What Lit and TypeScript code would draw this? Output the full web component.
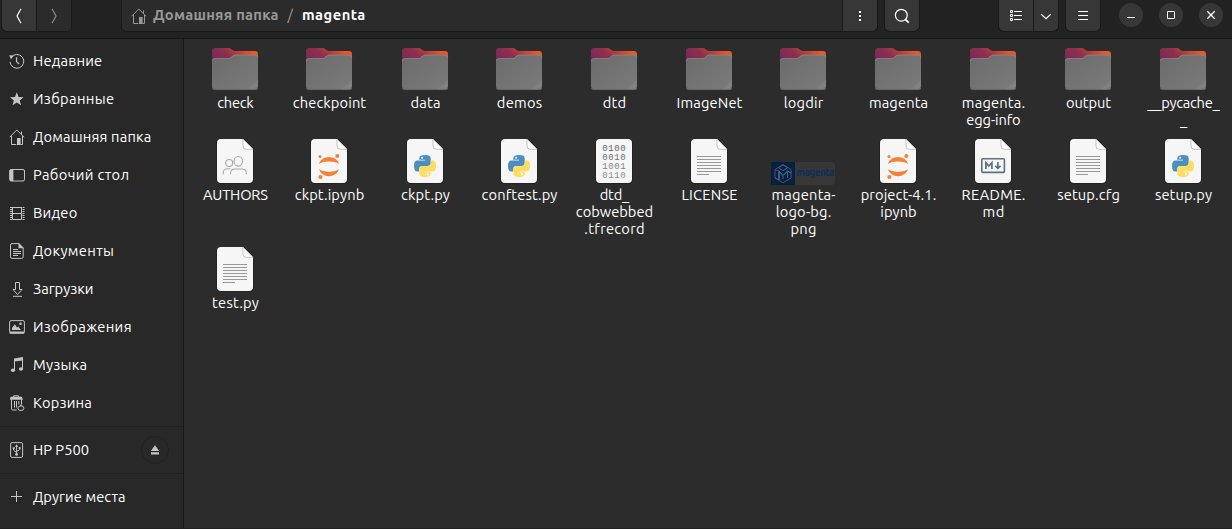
import { LitElement, html, svg, css, nothing, TemplateResult } from "lit";
import { customElement, property } from "lit/decorators.js";

const FAMILY = `Ubuntu, "Noto Sans", "Open Sans", sans-serif`;
const pen = document.createElement("canvas").getContext("2d")!;

/** Letter spacing that makes a line of text span the given ink width. */
function tracking(text: string, width: number, weight: number, size: number): number {
  if (text.length < 2) return 0;
  pen.font = `${weight} ${size}px ${FAMILY}`;
  const m = pen.measureText(text);
  return (width - (m.actualBoundingBoxRight + m.actualBoundingBoxLeft)) / (text.length - 1);
}

@customElement("text-line")
class TextLine extends LitElement {
  @property() text = "";
  @property({ type: Number }) width = 0;
  @property({ type: Number }) weight = 400;
  @property({ type: Number }) size = 14.667;
  static styles = css`
    :host { display: block; white-space: pre; height: 17px; line-height: 15px; }
  `;
  render() {
    const s = tracking(this.text, this.width, this.weight, this.size);
    return html`<span style="letter-spacing:${s}px;margin-right:${-s}px;font-size:${this.size}px;font-weight:${this.weight}">${this.text}</span>`;
  }
}

const house = svg`<path d="M.5 8.3 7.8 1l7.4 7.3M12.5 5.4V2.5M2.5 7v8.5h4.8M13.5 7v8.5h-2" fill="none" stroke="currentColor"/><path d="M8 9h3.6v7H8z" fill="currentColor"/>`;

const glyphs: Record<string, TemplateResult> = {
  home: house,
  recent: svg`<g fill="none" stroke="currentColor"><path d="M2.3 4.3A6.9 6.9 0 1 1 1 8.8"/><path d="M7.5 4.2v4.3l2.6 2.7" stroke-width="1.2"/></g><path d="M.2 2.2 4.8 2.6 2 6.2z" fill="currentColor"/>`,
  star: svg`<path fill="currentColor" d="m7.8 1.2 1.8 4.7 5 .3-3.9 3.2 1.4 4.9-4.300-2.800-4.300 2.800L4.900 9.400 1 6.200l5-.3z"/>`,
  desktop: svg`<rect x=".6" y="2.5" width="14.9" height="11.5" rx="1.5" fill="none" stroke="currentColor"/><path d="M1 3h3.4v11H1z" fill="currentColor"/>`,
  video: svg`<path fill="none" stroke="currentColor" d="M3.5 2v12.5M12.5 2v12.5M3.5 2.5h9M3.5 8.500h9M3.5 14.500h9"/><path stroke="currentColor" stroke-width="2" stroke-dasharray="1 1" d="M2 2v13M14.500 2v13"/>`,
  document: svg`<path fill="none" stroke="currentColor" d="M3 .6h7l4.2 4.1v9.2a1.5 1.5 0 0 1-1.5 1.5H3a1.5 1.5 0 0 1-1.500-1.500V2.100A1.500 1.500 0 0 1 3 .6z"/><path d="M9.5 0 14.600 5.200H9.500z" fill="currentColor"/><path stroke="currentColor" d="M4 6.5h5M4 8.5h8M4 10.5h8M4 12.5h5"/>`,
  download: svg`<path fill="none" stroke="currentColor" d="M6.5 1.5h4v7H13l-4.500 5-4.500-5h2.500zM4 15.300h9"/>`,
  picture: svg`<rect x=".6" y="1.6" width="14.8" height="12.3" rx="1.6" fill="none" stroke="currentColor"/><path fill="currentColor" d="M.5 12.500h15v1.300a1 1 0 0 1-1 1h-13a1 1 0 0 1-1-1zM3 11V9l2.800-3.800L8 8.400l1.200-1L12 11z"/><circle cx="11.5" cy="4.7" r="1.3" fill="currentColor"/>`,
  music: svg`<path fill="currentColor" d="M5 1.400 14 0v3.400L5 4.600z"/><path stroke="currentColor" d="M5.500 2v11M13.500 1v11"/><ellipse cx="4" cy="13.2" rx="2.1" ry="1.8" fill="currentColor"/><ellipse cx="12" cy="12" rx="2.1" ry="1.8" fill="currentColor"/>`,
  trash: svg`<path fill="none" stroke="currentColor" d="M2.500 4.500v9.300q0 1.200 1.200 1.200h4M12.500 4.500V9M4.600 2V.8h5V2M5.500 6v6.500M7.500 6v6.500M9.800 6v3.500"/><path fill="currentColor" d="M1.500 1.800h11.300l1.200 2.900H1z"/><ellipse cx="11.9" cy="13.2" rx="3" ry="2.3" fill="none" stroke="currentColor"/><path d="m11 10.700 1-2 1.600 2" fill="currentColor"/>`,
  usb: svg`<rect x="1.6" y=".6" width="12" height="14.8" rx="1.5" fill="none" stroke="currentColor"/><path fill="none" stroke="currentColor" d="M7.600 4v8.500M4.600 6.500v1.700l3 2.400M10.700 5.700v2l-3 1.600"/><path fill="currentColor" d="m7.600 2.200 1.700 2.500H5.900zM3.700 5.300h2v2h-2zM9.800 5h1.800v2H9.800z"/><circle cx="7.6" cy="12.4" r="1.4" fill="currentColor"/>`,
  plus: svg`<path stroke="currentColor" d="M2 7.500h11M7.500 2v11"/>`,
  eject: svg`<path fill="currentColor" d="M8 3.200 12.200 9H3.800zM4 10.200h8v2.300H4z"/>`,
  back: svg`<path fill="none" stroke="currentColor" stroke-width="1.2" d="M10 .8 6 8l4 7.200"/>`,
  forward: svg`<path fill="none" stroke="currentColor" stroke-width="1.2" d="m6 .8 4 7.200-4 7.200"/>`,
  dots: svg`<path fill="currentColor" d="M7 3h2v2H7zM7 7h2v2H7zM7 11h2v2H7z"/>`,
  search: svg`<circle cx="7.3" cy="7.2" r="5.9" fill="none" stroke="currentColor" stroke-width="1.2"/><path stroke="currentColor" stroke-width="1.9" d="m11.400 11.300 3.300 3.300"/>`,
  list: svg`<path fill="none" stroke="currentColor" d="M2.500 2.500h2v2h-2zM2.500 6.500h2v2h-2zM2.500 10.500h2v2h-2zM6 3.500h8M6 7.500h8M6 11.500h8"/>`,
  down: svg`<path fill="none" stroke="currentColor" stroke-width="1.2" d="m3.200 6.200 4.800 4.400 4.800-4.400"/>`,
  menu: svg`<path stroke="currentColor" d="M3 3.500h10M3 7.500h10M3 11.500h10"/>`,
  minimize: svg`<path stroke="currentColor" d="M4 10.500h8"/>`,
  maximize: svg`<path fill="none" stroke="currentColor" d="M4.500 4.500h7v7h-7z"/>`,
  close: svg`<path stroke="currentColor" stroke-width="1.3" d="m4.300 4.300 7.400 7.400M11.700 4.300l-7.400 7.400"/>`,
};

const icon = (name: string) =>
  html`<svg class="glyph" width="16" height="16" viewBox="0 0 16 16">${glyphs[name]}</svg>`;

const folder = html`<svg width="64" height="48" viewBox="0 0 64 48">
  <defs>
    <linearGradient id="back" x1="0" y1=".7" x2="1" y2=".3">
      <stop offset="0" stop-color="#74285a" /><stop offset=".42" stop-color="#8e304e" />
      <stop offset=".6" stop-color="#b03e3c" /><stop offset=".92" stop-color="#e9582a" />
    </linearGradient>
    <linearGradient id="front" x1="0" y1="0" x2="1" y2="1">
      <stop offset="0" stop-color="#6b6b6b" /><stop offset="1" stop-color="#7b7b7b" />
    </linearGradient>
  </defs>
  <path fill="url(#back)" d="M12 3h13.500q2 0 3 1.200l1.300 1q1 .8 2.200.8H52q3 0 3 3v12H9V6q0-3 3-3z" />
  <path fill="url(#front)" d="M9 16.500q0-3.300 3-3.300h13.500q2 0 3.300-1.600l1-1q1-.8 2.200-.8H52q3 0 3 3V42q0 3-3 3H12q-3 0-3-3z" />
  <path fill="none" stroke="#8c8c8c" stroke-width=".7" d="M9.200 16q.3-2.400 2.800-2.400h13.500q2 0 3.300-1.600l1-1q1-.8 2.200-.8H52q2.600 0 2.800 2.400" />
  <path fill="#808080" d="m44 45 11-10v7q0 3-3 3z" />
  <path fill="none" stroke="#595959" stroke-width=".7" d="M9.300 42q0 2.700 2.700 2.700h40q2.700 0 2.700-2.700" />
</svg>`;

const sheet = (art: TemplateResult, folded = true) => html`<svg width="64" height="48" viewBox="-14 -2 64 48">
  <rect x="-.6" y="0" width="37.2" height="44.7" rx="4" fill="#1f1f1f" />
  ${folded
    ? svg`<path fill="#f6f6f6" d="M4 0h22l10 10v30q0 4-4 4H4q-4 0-4-4V4q0-4 4-4z"/><path fill="#2c2c2c" d="M26.500-1H38v12z"/><path fill="#fff" stroke="#aaa" stroke-width=".7" d="M26 0v7q0 3.300 3.300 3.300H36z"/>`
    : svg`<rect width="36" height="44" rx="4" fill="#f6f6f6"/>`}
  ${art}
</svg>`;

const art: Record<string, () => TemplateResult> = {
  folder: () => folder,
  text: () => sheet(svg`<path stroke="#999" d="M6 17.500h24M6 20.500h24M6 23.500h24M6 26.500h24M6 29.500h24M6 32.500h24M6 35.500h12"/>`),
  authors: () => sheet(svg`<g fill="none" stroke="#aaa" stroke-width="1.1"><ellipse cx="21.3" cy="22.3" rx="4.3" ry="4.8"/><circle cx="12.2" cy="24" r="3.5"/><path d="M13.500 35.300v-1q0-4.300 4.300-4.300h7q4.500 0 4.500 4.300v1M6.300 35.300v-1.500q0-4 4-4h3"/></g>`),
  jupyter: () => sheet(svg`<g fill="#f58236"><path d="M7.800 24.800q2.800-6.800 10.200-6.800t10.200 6.800Q24 22.400 18 22.400T7.800 24.800zM7.800 30.300Q12 33 18 33t10.200-2.700q-2.800 6.900-10.200 6.900T7.800 30.300z"/><circle cx="26.3" cy="17.100" r="2"/><circle cx="9" cy="17.600" r="1.500"/><circle cx="9.400" cy="38" r="2.100"/></g>`),
  python: () => sheet(svg`<g transform="translate(7 16)"><path fill="#4d8ec0" d="M11 0q5.700 0 5.700 3.300v4.400Q16.700 11 13.400 11H8.500Q5.200 11 5.200 14.300V16.500H3.300Q0 16.500 0 11T3.300 5.500H11V4.700H5.300V3.300Q5.300 0 11 0z"/><path fill="#ffdc63" d="M11 22q5.700 0 5.700-3.300v-1.400H11v-.8h7.700q3.300 0 3.300-5.500t-3.300-5.500h-1.900v2.200q0 3.300-3.300 3.300H8.600q-3.300 0-3.300 3.300v4.400Q5.300 22 11 22z"/><circle cx="8.100" cy="2.800" r="1" fill="#fff"/><circle cx="13.900" cy="19.200" r="1" fill="#fff"/></g>`),
  binary: () => sheet(svg`<g class="bits">${["0100", "0010", "1001", "0110"].map(
    (row, i) => svg`<text x="6.300" y=${12.3 + i * 9} textLength="23.400" fill=${["#666", "#707070", "#858585", "#909090"][i]}>${row}</text>`)}</g>`, false),
  markdown: () => sheet(svg`<rect x="6.800" y="19.800" width="22.600" height="13.600" rx="1" fill="none" stroke="#5c737b" stroke-width="1.600"/><path fill="none" stroke="#5c737b" stroke-width="1.700" d="M10.900 30v-6.300l3 3.300 3-3.300V30M22.900 23v6M20.300 26.800l2.600 2.600 2.600-2.600"/>`),
  logo: () => html`<svg width="64" height="48" viewBox="0 0 64 48">
    <path fill="#373737" d="M22 25h38q4 0 4 4v15q0 4-4 4H22z" /><path fill="#01233f" d="M0 25h24v23H0z" />
    <g fill="none" stroke-width="1"><path stroke="#71406d" d="M4 32.500l8-4.800 8 4.800v8.500l-8 4.800-8-4.800zM4 32.500l4 1.500v8.500l-4-1.500" /><path stroke="#3c91a4" d="M8 43v-8.500l4.200 4 4.300-4.500 3.500 2" /><path stroke="#525a94" d="M12 27.700l-4.500 3 4.500 3 4.500-3zM12 42v-3.500M16.500 41v-6.500" /></g>
    <text class="brand" x="25.300" y="39.300" textLength="38">magenta</text>
  </svg>`,
};

type Line = [string, number];
const files: { kind: string; lines: Line[] }[] = [
  { kind: "folder", lines: [["check", 37]] },
  { kind: "folder", lines: [["checkpoint", 73.5]] },
  { kind: "folder", lines: [["data", 29.7]] },
  { kind: "folder", lines: [["demos", 45]] },
  { kind: "folder", lines: [["dtd", 22.7]] },
  { kind: "folder", lines: [["ImageNet", 65]] },
  { kind: "folder", lines: [["logdir", 39]] },
  { kind: "folder", lines: [["magenta", 57.7]] },
  { kind: "folder", lines: [["magenta.", 61.7], ["egg-info", 53.7]] },
  { kind: "folder", lines: [["output", 45.3]] },
  { kind: "folder", lines: [["__pycache_", 74.3], ["_", 7.7]] },
  { kind: "authors", lines: [["AUTHORS", 65.3]] },
  { kind: "jupyter", lines: [["ckpt.ipynb", 69]] },
  { kind: "python", lines: [["ckpt.py", 48.7]] },
  { kind: "python", lines: [["conftest.py", 75.7]] },
  { kind: "binary", lines: [["dtd_", 30.3], ["cobwebbed", 76.7], [".tfrecord", 59.7]] },
  { kind: "text", lines: [["LICENSE", 55]] },
  { kind: "logo", lines: [["magenta-", 63], ["logo-bg.", 54], ["png", 24.7]] },
  { kind: "jupyter", lines: [["project-4.1.", 74], ["ipynb", 34.7]] },
  { kind: "markdown", lines: [["README.", 62.3], ["md", 20.3]] },
  { kind: "text", lines: [["setup.cfg", 62.3]] },
  { kind: "python", lines: [["setup.py", 57]] },
  { kind: "text", lines: [["test.py", 45.7]] },
];

const places: [string, string, number][] = [
  ["recent", "Недавние", 68],
  ["star", "Избранные", 80],
  ["home", "Домашняя папка", 117.7],
  ["desktop", "Рабочий стол", 94.5],
  ["video", "Видео", 42.7],
  ["document", "Документы", 80],
  ["download", "Загрузки", 59.7],
  ["picture", "Изображения", 96.7],
  ["music", "Музыка", 52.5],
  ["trash", "Корзина", 57.3],
];

@customElement("app-root")
class AppRoot extends LitElement {
  static styles = css`
    * { box-sizing: border-box; }
    :host {
      display: flex; flex-direction: column; width: 100%; height: 529px; overflow: hidden;
      background: #2c2c2c; color: #fff;
      font: 14.667px/17px Ubuntu, "Noto Sans", "Open Sans", sans-serif;
    }
    svg { display: block; flex: none; }
    header {
      display: flex; flex: none; align-items: flex-start; height: 39px; padding-left: 1px;
      background: #222; border-bottom: 1px solid #161616;
    }
    .group {
      display: flex; height: 32px; border: 1px solid #191919; border-top: 0;
      border-radius: 0 0 6px 6px; background: #373737; overflow: hidden;
    }
    .btn { display: grid; place-items: center; width: 34px; height: 31px; }
    .btn + .btn, .path + .btn { width: 35px; border-left: 1px solid #191919; }
    .btn.off { background: #2b2b2b; color: #8c8c8c; }
    .btn.slim.slim { width: 25px; }
    .location { width: 757px; margin-left: 49px; }
    .path { display: flex; flex: 1; align-items: center; gap: 6px; padding-left: 9px; background: #2b2b2b; color: #999; }
    .path .slash { height: 17px; line-height: 15px; padding: 0 3px; }
    .current { color: #fff; }
    .search { margin-left: 6px; }
    .view { margin-left: 78px; }
    .main-menu { margin-left: 6px; }
    .controls { display: flex; gap: 16px; margin: 3px 0 0 18px; }
    .control { display: grid; place-items: center; width: 24px; height: 24px; border-radius: 50%; background: #373737; }
    .body { display: flex; flex: 1; min-height: 0; border-bottom: 1px solid #212121; }
    aside { width: 184px; flex: none; padding-top: 3px; background: #282828; border-right: 1px solid #171717; }
    .place { display: flex; align-items: center; gap: 8px; height: 38px; padding-left: 9px; }
    .place .glyph { color: #c5c5c5; }
    .rule { height: 1px; background: #212121; }
    .place.device { height: 46px; }
    .eject { display: grid; place-items: center; width: 28px; height: 28px; margin: 0 14px 0 auto; border: 1px solid #212121; border-radius: 50%; }
    .spacer { height: 4px; }
    .files {
      display: grid; flex: 1; padding: 6px 0 0 4px;
      grid-template-columns: 94px 96px 94px 95px 95px 94px 95px 95px 95px 95px 94px;
      grid-template-rows: 92px 108px 100px;
    }
    .file { display: flex; flex-direction: column; align-items: center; width: 94px; }
    .name { display: flex; flex-direction: column; align-items: center; padding: 2px 0 0 1px; }
    .bits { font: 9px "Liberation Mono", monospace; }
    .brand { font: bold 10px Ubuntu, Lato, sans-serif; fill: #0d2f5c; }
  `;

  place(name: string, label: string, width: number, extra: TemplateResult | typeof nothing = nothing) {
    return html`<div class="place ${extra === nothing ? "" : "device"}">
      ${icon(name)}<text-line .text=${label} .width=${width}></text-line>${extra}
    </div>`;
  }

  render() {
    return html`
      <header>
        <div class="group"><div class="btn">${icon("back")}</div><div class="btn off">${icon("forward")}</div></div>
        <div class="group location">
          <div class="path">
            ${icon("home")}
            <text-line .text=${"Домашняя папка"} .width=${124.6} .weight=${700}></text-line>
            <span class="slash">/</span>
            <text-line class="current" .text=${"magenta"} .width=${61.3} .weight=${700}></text-line>
          </div>
          <div class="btn">${icon("dots")}</div>
        </div>
        <div class="group search"><div class="btn">${icon("search")}</div></div>
        <div class="group view"><div class="btn">${icon("list")}</div><div class="btn slim">${icon("down")}</div></div>
        <div class="group main-menu"><div class="btn">${icon("menu")}</div></div>
        <div class="controls">
          ${["minimize", "maximize", "close"].map((n) => html`<div class="control">${icon(n)}</div>`)}
        </div>
      </header>
      <div class="body">
        <aside>
          ${places.map(([n, l, w]) => this.place(n, l, w))}
          <div class="spacer"></div>
          <div class="rule"></div>
          ${this.place("usb", "HP P500", 54.7, html`<div class="eject">${icon("eject")}</div>`)}
          <div class="rule"></div>
          <div class="spacer"></div>
          ${this.place("plus", "Другие места", 92)}
        </aside>
        <main class="files">
          ${files.map((f) => html`<div class="file">
            ${art[f.kind]()}
            <div class="name">${f.lines.map(([t, w]) => html`<text-line .text=${t} .width=${w}></text-line>`)}</div>
          </div>`)}
        </main>
      </div>
    `;
  }
}
